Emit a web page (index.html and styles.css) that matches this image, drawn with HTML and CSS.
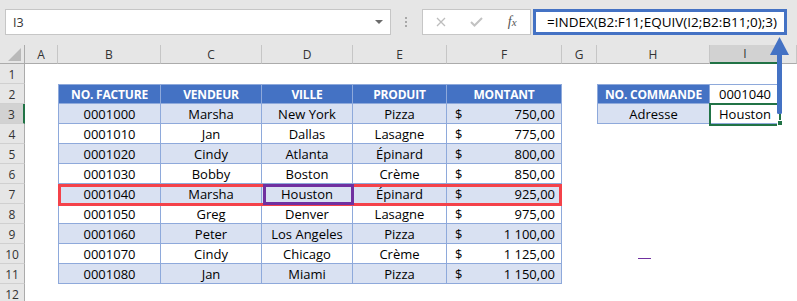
FILE: index.html
```
<!DOCTYPE html>
<html lang="fr">
<head>
<meta charset="utf-8">
<title>INDEX EQUIV</title>
<link rel="stylesheet" href="styles.css">
</head>
<body>
<div class="topbar">
  <div class="namebox"><span>I3</span><span class="dd"></span></div>
  <div class="grip"><i></i><i></i><i></i></div>
  <div class="btns">
    <span class="slot"><svg width="10" height="10" viewBox="0 0 10 10"><path d="M1 1L9 9M9 1L1 9" stroke="#bdbdbd" stroke-width="1.3" fill="none"/></svg></span>
    <span class="slot"><svg width="13" height="10" viewBox="0 0 13 10"><path d="M1 5L4.5 8.5L12 1" stroke="#c2c2c2" stroke-width="2" fill="none"/></svg></span>
    <span class="slot fx">f<small>x</small></span>
  </div>
  <div class="formula">=INDEX(B2:F11;EQUIV(I2;B2:B11;0);3)</div>
</div>

<div class="sheet">
  <div class="ch corner"><svg width="13" height="13" viewBox="0 0 13 13"><path d="M13 0V13H0Z" fill="#b9b9b9"/></svg></div>
  <div class="ch">A</div><div class="ch">B</div><div class="ch">C</div><div class="ch">D</div><div class="ch">E</div><div class="ch">F</div><div class="ch">G</div><div class="ch">H</div><div class="ch on">I</div><div class="ch"></div>

  <div class="rh">1</div><div></div><div></div><div></div><div></div><div></div><div></div><div></div><div></div><div></div><div></div>

  <div class="rh">2</div><div></div>
  <div class="t th tl tt">NO. FACTURE</div><div class="t th tt">VENDEUR</div><div class="t th tt">VILLE</div><div class="t th tt">PRODUIT</div><div class="t th tt">MONTANT</div>
  <div></div><div class="t th tl tt">NO. COMMANDE</div><div class="t tt">0001040</div><div></div>

  <div class="rh on">3</div><div></div>
  <div class="t b tl">0001000</div><div class="t b">Marsha</div><div class="t b">New York</div><div class="t b">Pizza</div><div class="t b m"><span>$</span><span>750,00</span></div>
  <div></div><div class="t b tl">Adresse</div><div class="t">Houston</div><div></div>

  <div class="rh">4</div><div></div>
  <div class="t tl">0001010</div><div class="t">Jan</div><div class="t">Dallas</div><div class="t">Lasagne</div><div class="t m"><span>$</span><span>775,00</span></div>
  <div></div><div></div><div></div><div></div>

  <div class="rh">5</div><div></div>
  <div class="t b tl">0001020</div><div class="t b">Cindy</div><div class="t b">Atlanta</div><div class="t b">Épinard</div><div class="t b m"><span>$</span><span>800,00</span></div>
  <div></div><div></div><div></div><div></div>

  <div class="rh">6</div><div></div>
  <div class="t tl">0001030</div><div class="t">Bobby</div><div class="t">Boston</div><div class="t">Crème</div><div class="t m"><span>$</span><span>850,00</span></div>
  <div></div><div></div><div></div><div></div>

  <div class="rh">7</div><div></div>
  <div class="t b tl">0001040</div><div class="t b">Marsha</div><div class="t b">Houston</div><div class="t b">Épinard</div><div class="t b m"><span>$</span><span>925,00</span></div>
  <div></div><div></div><div></div><div></div>

  <div class="rh">8</div><div></div>
  <div class="t tl">0001050</div><div class="t">Greg</div><div class="t">Denver</div><div class="t">Lasagne</div><div class="t m"><span>$</span><span>975,00</span></div>
  <div></div><div></div><div></div><div></div>

  <div class="rh">9</div><div></div>
  <div class="t b tl">0001060</div><div class="t b">Peter</div><div class="t b">Los Angeles</div><div class="t b">Pizza</div><div class="t b m"><span>$</span><span>1 100,00</span></div>
  <div></div><div></div><div></div><div></div>

  <div class="rh">10</div><div></div>
  <div class="t tl">0001070</div><div class="t">Cindy</div><div class="t">Chicago</div><div class="t">Crème</div><div class="t m"><span>$</span><span>1 125,00</span></div>
  <div></div><div></div><div></div><div></div>

  <div class="rh">11</div><div></div>
  <div class="t b tl">0001080</div><div class="t b">Jan</div><div class="t b">Miami</div><div class="t b">Pizza</div><div class="t b m"><span>$</span><span>1 150,00</span></div>
  <div></div><div></div><div></div><div></div>

  <div class="rh">12</div><div></div><div></div><div></div><div></div><div></div><div></div><div></div><div></div><div></div><div></div>
</div>

<div class="ov redbox"></div>
<div class="ov purplebox"></div>
<div class="ov dash"></div>
<div class="ov sel"></div>
<div class="ov handle"></div>
<svg class="ov arrow" width="22" height="82" viewBox="0 0 22 82"><path d="M10.5 2L20 20H1Z" fill="#4472c4"/><rect x="8" y="18" width="5" height="61" rx="1.5" fill="#4472c4"/></svg>
</body>
</html>
```

FILE: styles.css
```
* { box-sizing: border-box; margin: 0; padding: 0; }
html, body { width: 797px; height: 301px; overflow: hidden; }
body { background: #fff; font-family: "Open Sans", "Liberation Sans", sans-serif; position: relative; }

.topbar { height: 45px; background: #e6e6e6; display: flex; align-items: flex-start; padding: 9px 0 0 5px; }
.namebox { width: 386px; height: 26px; background: #fff; border: 1px solid #c6c6c6; display: flex; align-items: center; justify-content: space-between; padding: 0 7px 0 7px; font-size: 12.5px; color: #333; }
.dd { width: 0; height: 0; border-left: 4px solid transparent; border-right: 4px solid transparent; border-top: 4px solid #6b6b6b; }
.grip { margin-left: 14px; margin-top: 8px; display: flex; flex-direction: column; gap: 2px; }
.grip i { display: block; width: 2px; height: 2px; background: #a8a8a8; }
.btns { margin-left: 15px; width: 109px; height: 26px; background: #fff; border: 1px solid #c6c6c6; display: flex; align-items: center; }
.slot { width: 36px; height: 24px; display: flex; align-items: center; justify-content: center; }
.fx { font-family: "Liberation Serif", serif; font-style: italic; font-size: 14px; color: #555; }
.fx small { font-size: 11px; }
.formula { margin-left: 2px; width: 254px; height: 26px; border: 3px solid #4472c4; background: #fff; font-size: 13.5px; color: #000; padding-left: 11px; display: flex; align-items: center; white-space: nowrap; }

.sheet { display: grid; grid-template-columns: 25px 33px 103px 101px 91px 94px 115px 35px 113px 71px 16px; grid-template-rows: 19px repeat(12, 20px); }
.ch { background: #e6e6e6; border-right: 1px solid #c6c6c6; border-bottom: 1px solid #ababab; font-size: 12px; color: #333; display: flex; align-items: center; justify-content: center; }
.ch.on { background: #d2d2d2; border-bottom: 2px solid #217346; }
.corner { justify-content: flex-end; align-items: flex-end; padding: 0 3px 2px 0; border-right-color: #ababab; }
.rh { background: #e6e6e6; border-right: 1px solid #ababab; border-bottom: 1px solid #d0d0d0; font-size: 12px; line-height: 12px; color: #333; display: flex; align-items: center; justify-content: center; padding-top: 2px; }
.rh.on { background: #d2d2d2; border-right: 2px solid #217346; }

.t { border-right: 1px solid #8ea9db; border-bottom: 1px solid #8ea9db; font-size: 13px; color: #000; display: flex; align-items: flex-end; justify-content: center; white-space: nowrap; line-height: 17px; padding-bottom: 0; }
.tl { border-left: 1px solid #8ea9db; }
.tt { border-top: 1px solid #8ea9db; }
.th { background: #4472c4; color: #fff; font-weight: 700; font-size: 12px; letter-spacing: -0.2px; }
.b { background: #d9e1f2; }
.m { justify-content: space-between; padding: 0 6px 0 8px; }

.ov { position: absolute; }
.redbox { left: 58px; top: 184px; width: 504px; height: 22px; border: 3px solid #f4424a; }
.purplebox { left: 263px; top: 184px; width: 91px; height: 21px; border: 3px solid #7030a0; }
.dash { left: 638px; top: 258px; width: 13px; height: 1px; background: #7030a0; }
.sel { left: 709px; top: 103px; width: 72px; height: 23px; border: 2px solid #217346; }
.handle { left: 777px; top: 120px; width: 6px; height: 6px; background: #217346; border: 1px solid #fff; }
.arrow { left: 769px; top: 35px; }
```
